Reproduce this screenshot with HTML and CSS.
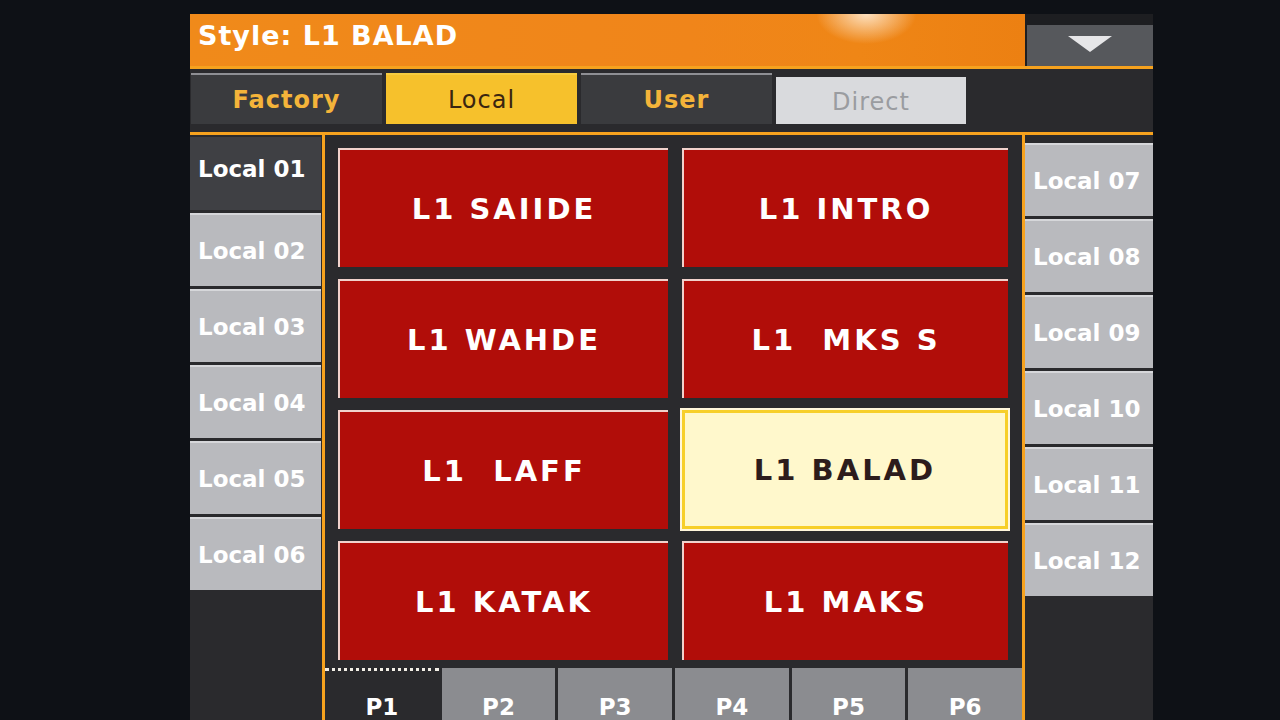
FILE: index.html
```html
<!DOCTYPE html>
<html lang="en">
<head>
    <meta charset="UTF-8">
    <title>Style Select - Local</title>
    <link rel="stylesheet" href="styles.css">
</head>
<body>
    <div class="screen">
        <header class="title-bar">
            <div class="title">Style:&nbsp;L1 BALAD</div>
            <div class="menu-btn">
                <svg viewBox="0 0 44 16" width="44" height="16">
                    <path d="M0,0 L44,0 L22,16 Z" fill="#e6e6e8"/>
                </svg>
            </div>
        </header>

        <nav class="bank-tabs">
            <div class="bank-tab">Factory</div>
            <div class="bank-tab active">Local</div>
            <div class="bank-tab">User</div>
            <div class="bank-tab disabled">Direct</div>
        </nav>

        <main class="browser">
            <ul class="bank-list">
                <li class="bank-item selected">Local 01</li>
                <li class="bank-item">Local 02</li>
                <li class="bank-item">Local 03</li>
                <li class="bank-item">Local 04</li>
                <li class="bank-item">Local 05</li>
                <li class="bank-item">Local 06</li>
            </ul>

            <section class="styles-area">
                <div class="style-grid">
                    <div class="style-btn">L1 SAIIDE</div>
                    <div class="style-btn">L1 INTRO</div>
                    <div class="style-btn">L1 WAHDE</div>
                    <div class="style-btn">L1&nbsp;&nbsp;MKS S</div>
                    <div class="style-btn">L1&nbsp;&nbsp;LAFF</div>
                    <div class="style-btn current">L1 BALAD</div>
                    <div class="style-btn">L1 KATAK</div>
                    <div class="style-btn">L1 MAKS</div>
                </div>
                <div class="page-tabs">
                    <div class="page-tab active">P1</div>
                    <div class="page-tab">P2</div>
                    <div class="page-tab">P3</div>
                    <div class="page-tab">P4</div>
                    <div class="page-tab">P5</div>
                    <div class="page-tab">P6</div>
                </div>
            </section>

            <ul class="bank-list right">
                <li class="bank-item">Local 07</li>
                <li class="bank-item">Local 08</li>
                <li class="bank-item">Local 09</li>
                <li class="bank-item">Local 10</li>
                <li class="bank-item">Local 11</li>
                <li class="bank-item">Local 12</li>
            </ul>
        </main>
    </div>
</body>
</html>
```

FILE: styles.css
```css
* {
    margin: 0;
    padding: 0;
    box-sizing: border-box;
}

body {
    font-family: "DejaVu Sans", "Liberation Sans", sans-serif;
    background-color: #0e1116;
    height: 720px;
    overflow: hidden;
}

/* Screen */
.screen {
    width: 963px;
    height: 706px;
    margin: 14px 0 0 190px;
    background-color: #2a2a2d;
    display: flex;
    flex-direction: column;
}

/* Title bar */
.title-bar {
    display: flex;
    height: 55px;
    border-bottom: 3px solid #f6a21e;
    background-color: #1d1e21;
}

.title {
    flex: 1;
    background:
        radial-gradient(ellipse 50px 30px at 81% 0%, rgba(255, 240, 220, 0.85), rgba(255, 240, 220, 0) 100%),
        linear-gradient(90deg, #f08a1a 0%, #f0851a 60%, #ef8616 80%, #ec8012 100%);
    color: #fff;
    font-size: 27px;
    font-weight: 600;
    letter-spacing: 1px;
    padding: 6px 0 0 8px;
}

.menu-btn {
    width: 126px;
    margin-left: 2px;
    margin-top: 11px;
    background-color: #56585c;
    display: flex;
    justify-content: center;
    align-items: flex-start;
    padding-top: 11px;
}

/* Bank tabs */
.bank-tabs {
    display: flex;
    gap: 4px;
    height: 66px;
    padding: 4px 0 8px 1px;
    border-bottom: 3px solid #f6a21e;
}

.bank-tab {
    width: 191px;
    background-color: #3a3b3e;
    border-top: 2px solid #8e8f94;
    color: #f4b43a;
    font-size: 24px;
    font-weight: 600;
    letter-spacing: 1px;
    display: flex;
    align-items: center;
    justify-content: center;
}

.bank-tab.active {
    background-color: #f6c12c;
    border-top-color: #f8cc40;
    color: #3a2510;
    font-weight: normal;
}

.bank-tab.disabled {
    background-color: #d9dadd;
    border-top-color: #d9dadd;
    color: #9a9ca0;
    font-weight: normal;
    width: 190px;
    margin-top: 4px;
}

/* Browser area */
.browser {
    flex: 1;
    display: flex;
    min-height: 0;
}

.bank-list {
    list-style: none;
    width: 135px;
    padding-top: 2px;
    border-right: 3px solid #f6a21e;
    display: flex;
    flex-direction: column;
    gap: 3px;
}

.bank-list.right {
    width: 131px;
    padding-top: 8px;
    border-right: none;
    border-left: 3px solid #f6a21e;
}

.bank-item {
    width: 131px;
    height: 73px;
    background-color: #b9babe;
    border-top: 2px solid #d6d7da;
    color: #fff;
    font-size: 23px;
    font-weight: bold;
    display: flex;
    align-items: center;
    padding-left: 8px;
}

.bank-list.right .bank-item {
    width: 128px;
}

.bank-item.selected {
    background-color: #3f4044;
    border-top-color: #3f4044;
    align-items: flex-start;
    padding-top: 17px;
}

/* Style buttons */
.styles-area {
    flex: 1;
    display: flex;
    flex-direction: column;
}

.style-grid {
    display: grid;
    grid-template-columns: 330px 326px;
    grid-auto-rows: 119px;
    column-gap: 14px;
    row-gap: 12px;
    padding: 13px 0 0 13px;
}

.style-btn {
    background-color: #b10d09;
    border-top: 2px solid #f1d2cc;
    border-left: 2px solid #f1d2cc;
    color: #fff;
    font-size: 29px;
    font-weight: bold;
    letter-spacing: 3px;
    display: flex;
    align-items: center;
    justify-content: center;
}

.style-btn.current {
    background-color: #fff8cc;
    border: 3px solid #f7cf2a;
    outline: 2px solid #fff6dc;
    color: #2d1c1c;
}

/* Page tabs */
.page-tabs {
    display: flex;
    gap: 3px;
    margin-top: 8px;
    flex: 1;
}

.page-tab {
    flex: 1;
    background-color: #8b8c90;
    color: #fff;
    font-size: 23px;
    font-weight: bold;
    display: flex;
    justify-content: center;
    padding-top: 26px;
}

.page-tab.active {
    background-color: #2a2a2d;
    border-top: 3px dotted #f2eee6;
    padding-top: 23px;
}
```
